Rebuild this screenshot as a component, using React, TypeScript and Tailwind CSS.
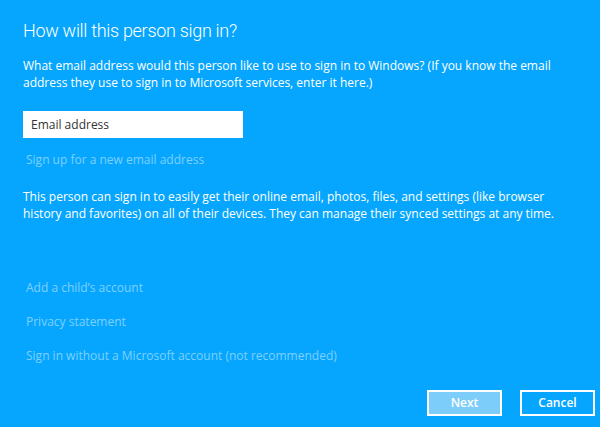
export default function App() {
  return (
    <div
      className="flex h-[427px] w-[600px] flex-col bg-[#06a6fe] pl-[23px] pr-[5px] text-white"
      style={{ fontFamily: '"Segoe UI", "Open Sans", "Liberation Sans", sans-serif' }}
    >
      {/* Title */}
      <h1
        className="mt-[19px] text-[18px] font-light leading-[24px] tracking-[-0.3px]"
        style={{ fontFamily: 'Roboto, "Liberation Sans", sans-serif' }}
      >
        How will this person sign in?
      </h1>

      <p className="mt-[14px] w-[540px] text-[12px] leading-[17px]">
        What email address would this person like to use to sign in to Windows? (If you know the email
        address they use to sign in to Microsoft services, enter it here.)
      </p>

      {/* Email field */}
      <div className="mt-[20px] flex h-[27px] w-[220px] items-center bg-white px-[8px] text-[12px] text-[#333333]">
        Email address
      </div>

      <a className="mt-[13px] ml-[3px] text-[12px] leading-[17px] text-[#7fd0ff]">
        Sign up for a new email address
      </a>

      <p className="mt-[20px] w-[560px] text-[12px] leading-[17px]">
        This person can sign in to easily get their online email, photos, files, and settings (like browser
        history and favorites) on all of their devices. They can manage their synced settings at any time.
      </p>

      {/* Links */}
      <div className="mt-[57px] ml-[3px] flex flex-col gap-[17px] text-[12px] leading-[17px] text-[#7fd0ff]">
        <a>Add a child’s account</a>
        <a>Privacy statement</a>
        <a>Sign in without a Microsoft account (not recommended)</a>
      </div>

      {/* Buttons */}
      <div className="mt-auto mb-[11px] flex justify-end gap-[18px]">
        <button className="h-[26px] w-[75px] border-2 border-white bg-[#7dcdfb] text-[12px] font-semibold text-white">
          Next
        </button>
        <button className="h-[26px] w-[75px] border-2 border-white bg-transparent text-[12px] font-semibold text-white">
          Cancel
        </button>
      </div>
    </div>
  );
}
